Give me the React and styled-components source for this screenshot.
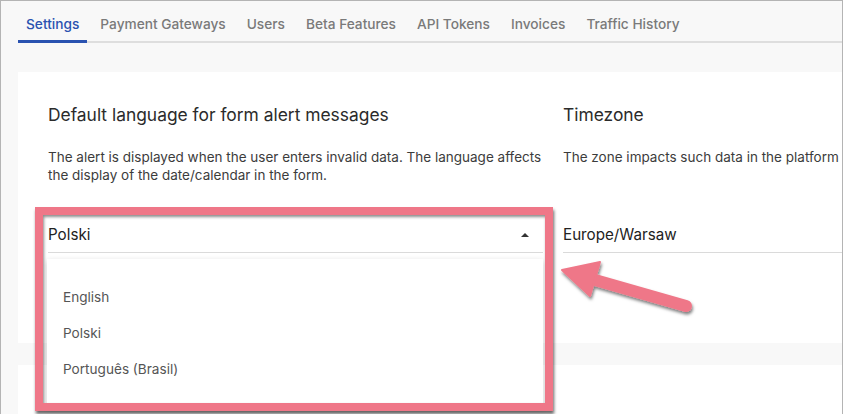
import React from "react";
import styled, { createGlobalStyle } from "styled-components";

const GlobalStyle = createGlobalStyle`
  html, body { margin: 0; padding: 0; background: #ffffff; }
  body { font-family: Inter, "Noto Sans", sans-serif; }
`;

const Frame = styled.div`
  position: relative;
  width: 843px;
  height: 414px;
  box-sizing: border-box;
  border: 1px solid #b4b4b4;
  border-bottom: none;
  background: #f8f8f8;
  overflow: hidden;
  padding-left: 17px;
`;

const TabBar = styled.nav`
  display: flex;
  gap: 5px;
  border-bottom: 2px solid #dedede;
  width: 1400px;
`;

const Tab = styled.div`
  height: 42px;
  box-sizing: border-box;
  padding: 7px 8px 0;
  margin-bottom: -2px;
  display: flex;
  align-items: center;
  font-size: 13.7px;
  font-weight: 500;
  color: ${(p) => (p.$active ? "#2a52b0" : "#7a7a7a")};
  border-bottom: 3px solid ${(p) => (p.$active ? "#2a52b0" : "transparent")};
  white-space: nowrap;
`;

const Card = styled.section`
  margin-top: 29px;
  width: 1400px;
  height: 271px;
  box-sizing: border-box;
  background: #ffffff;
  padding: 32px 30px 0;
  display: flex;
  gap: 18px;
`;

const Column = styled.div`
  position: relative;
  width: ${(p) => p.$width || "497px"};
  flex: none;
`;

const Heading = styled.h2`
  margin: 0 0 22px;
  font-size: 17.4px;
  line-height: 22px;
  font-weight: 400;
  color: #2b2b2b;
`;

const Desc = styled.p`
  margin: 0 0 33px;
  min-height: 36px;
  font-size: 13.5px;
  line-height: 18px;
  color: #3c3c3c;
`;

const SelectField = styled.div`
  height: 36px;
  width: ${(p) => p.$width || "495px"};
  box-sizing: border-box;
  display: flex;
  align-items: center;
  justify-content: space-between;
  border-bottom: 1px solid #dadada;
  font-size: 15.2px;
  color: #222;
`;

const Caret = styled.span`
  width: 0;
  height: 0;
  margin-right: 14px;
  border-left: 4px solid transparent;
  border-right: 4px solid transparent;
  border-bottom: 4px solid #333;
`;

const Menu = styled.ul`
  position: absolute;
  top: 155px;
  left: -1px;
  width: 496px;
  margin: 0;
  padding: 20px 0;
  list-style: none;
  background: #fff;
  box-shadow: 0 2px 6px rgba(0, 0, 0, 0.18);
`;

const MenuItem = styled.li`
  height: 36px;
  line-height: 36px;
  padding: 0 16px;
  font-size: 13.6px;
  color: #555;
`;

const Card2 = styled.section`
  margin-top: 22px;
  width: 1400px;
  height: 120px;
  background: #ffffff;
`;

const Highlight = styled.div`
  position: absolute;
  left: 34px;
  top: 206px;
  width: 518px;
  height: 204px;
  box-sizing: border-box;
  border: 8px solid #ef7788;
  box-shadow: 1px 3px 3px rgba(0, 0, 0, 0.6), inset 1px 2px 3px rgba(0, 0, 0, 0.45);
  pointer-events: none;
`;

const Overlay = styled.svg`
  position: absolute;
  left: -1px;
  top: -1px;
  pointer-events: none;
`;

const tabs = ["Settings", "Payment Gateways", "Users", "Beta Features", "API Tokens", "Invoices", "Traffic History"];

export default function App() {
  return (
    <>
      <GlobalStyle />
      <Frame>
        <TabBar>
          {tabs.map((t, i) => (
            <Tab key={t} $active={i === 0}>{t}</Tab>
          ))}
        </TabBar>
        <Card>
          <Column>
            <Heading>Default language for form alert messages</Heading>
            <Desc>
              The alert is displayed when the user enters invalid data. The language affects the display of the date/calendar in the form.
            </Desc>
            <SelectField>
              <span>Polski</span>
              <Caret />
            </SelectField>
            <Menu>
              <MenuItem>English</MenuItem>
              <MenuItem>Polski</MenuItem>
              <MenuItem>Português (Brasil)</MenuItem>
            </Menu>
          </Column>
          <Column $width="760px">
            <Heading>Timezone</Heading>
            <Desc>The zone impacts such data in the platform as the dates of transactions and reports.</Desc>
            <SelectField $width="760px">
              <span>Europe/Warsaw</span>
            </SelectField>
          </Column>
        </Card>
        <Card2 />
        <Highlight />
        <Overlay width="843" height="414" viewBox="0 0 843 414">
          <defs>
            <filter id="sh" x="-20%" y="-20%" width="140%" height="160%">
              <feDropShadow dx="1" dy="2.5" stdDeviation="1.6" floodColor="#000" floodOpacity="0.5" />
            </filter>
          </defs>
          <g filter="url(#sh)" fill="#ef7788" stroke="#ef7788">
            <line x1="686" y1="306" x2="588" y2="278" strokeWidth="12" strokeLinecap="round" />
            <polygon points="562,270 600,262 590,296" strokeWidth="2" strokeLinejoin="round" />
          </g>
        </Overlay>
      </Frame>
    </>
  );
}
